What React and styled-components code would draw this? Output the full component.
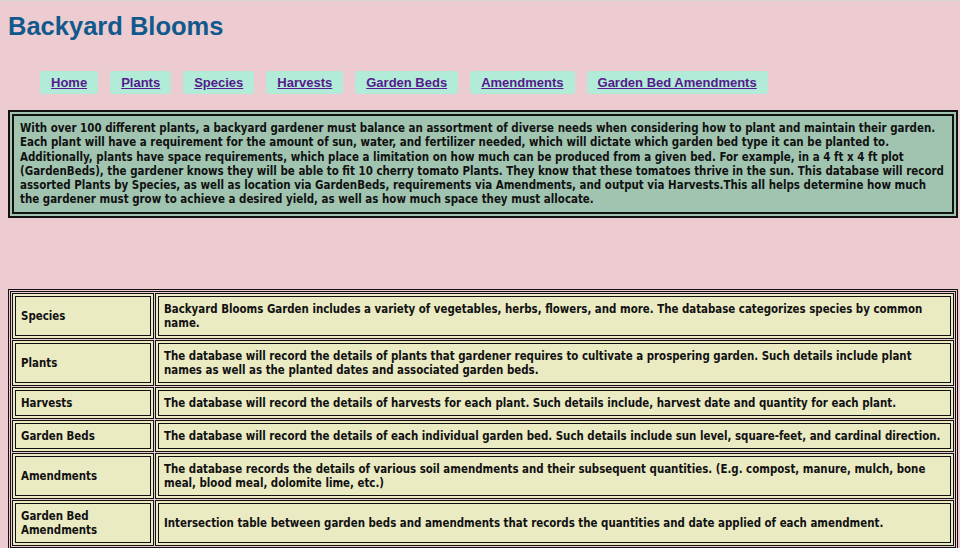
import React from "react";
import styled, { createGlobalStyle } from "styled-components";

const Global = createGlobalStyle`
  html, body { margin: 0; padding: 0; background: #ecccd0; }
  body { font-family: "Liberation Sans", Arial, sans-serif; }
`;

const Page = styled.div`
  border-top: 1px solid #d9d3d4;
  padding: 0 2px 0 8px;
  min-height: 547px;
`;

const Title = styled.h1`
  margin: 11px 0 0;
  font-family: "Liberation Sans", Arial, sans-serif;
  font-size: 25.5px;
  font-weight: bold;
  color: #11598c;
  line-height: 29px;
`;

const Nav = styled.nav`
  display: flex;
  gap: 12px;
  margin-top: 30px;
  padding-left: 32px;
`;

const NavLink = styled.a`
  display: block;
  background: #b3ebd9;
  border-radius: 3px;
  padding: 4px 11px;
  font-family: "Liberation Sans", Arial, sans-serif;
  font-size: 13px;
  font-weight: bold;
  line-height: 15px;
  color: #551a8b;
  text-decoration: underline;
`;

const Intro = styled.div`
  margin-top: 16px;
  background: #a0c4b0;
  border: 6px double #111;
  padding: 5px 6px;
  font-family: "DejaVu Sans Condensed", "DejaVu Sans", sans-serif;
  font-weight: bold;
  font-size: 11.45px;
  line-height: 14.3px;
  color: #111;
`;

const Table = styled.table`
  margin-top: 71px;
  width: 100%;
  border: 3px double #111;
  border-collapse: separate;
  border-spacing: 1px;
  font-family: "DejaVu Sans Condensed", "DejaVu Sans", sans-serif;
  font-weight: bold;
  font-size: 11.4px;
  line-height: 14px;
  color: #111;
`;

const Cell = styled.td`
  background: #eaeac3;
  border: 4px double #111;
  padding: 5px;
  vertical-align: middle;
  width: ${(p) => (p.$label ? "124px" : "auto")};
`;

const links = [
  "Home",
  "Plants",
  "Species",
  "Harvests",
  "Garden Beds",
  "Amendments",
  "Garden Bed Amendments",
];

const rows = [
  [
    "Species",
    "Backyard Blooms Garden includes a variety of vegetables, herbs, flowers, and more. The database categorizes species by common name.",
  ],
  [
    "Plants",
    "The database will record the details of plants that gardener requires to cultivate a prospering garden. Such details include plant names as well as the planted dates and associated garden beds.",
  ],
  [
    "Harvests",
    "The database will record the details of harvests for each plant. Such details include, harvest date and quantity for each plant.",
  ],
  [
    "Garden Beds",
    "The database will record the details of each individual garden bed. Such details include sun level, square-feet, and cardinal direction.",
  ],
  [
    "Amendments",
    "The database records the details of various soil amendments and their subsequent quantities. (E.g. compost, manure, mulch, bone meal, blood meal, dolomite lime, etc.)",
  ],
  [
    "Garden Bed Amendments",
    "Intersection table between garden beds and amendments that records the quantities and date applied of each amendment.",
  ],
];

export default function App() {
  return (
    <Page>
      <Global />
      <Title>Backyard Blooms</Title>
      <Nav>
        {links.map((l) => (
          <NavLink key={l} href="#">
            {l}
          </NavLink>
        ))}
      </Nav>
      <Intro>
        With over 100 different plants, a backyard gardener must balance an assortment of diverse needs when considering how to plant and maintain their garden. Each plant will have a requirement for the amount of sun, water, and fertilizer needed, which will dictate which garden bed type it can be planted to. Additionally, plants have space requirements, which place a limitation on how much can be produced from a given bed. For example, in a 4 ft x 4 ft plot (GardenBeds), the gardener knows they will be able to fit 10 cherry tomato Plants. They know that these tomatoes thrive in the sun. This database will record assorted Plants by Species, as well as location via GardenBeds, requirements via Amendments, and output via Harvests.This all helps determine how much the gardener must grow to achieve a desired yield, as well as how much space they must allocate.
      </Intro>
      <Table>
        <tbody>
          {rows.map(([k, v]) => (
            <tr key={k}>
              <Cell $label>{k}</Cell>
              <Cell>{v}</Cell>
            </tr>
          ))}
        </tbody>
      </Table>
    </Page>
  );
}
